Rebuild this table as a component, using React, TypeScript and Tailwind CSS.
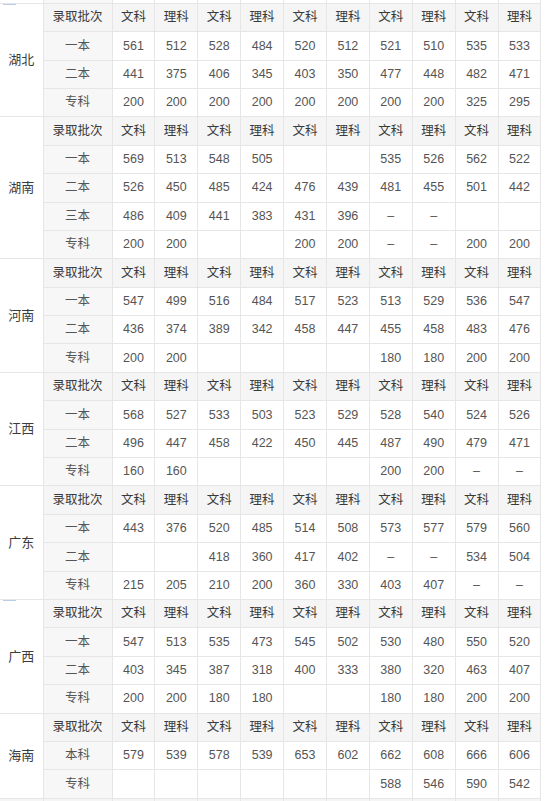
import React from "react";

type Block = {
  province: string;
  mark?: boolean;
  rows: { label: string; values: string[] }[];
};

const E = "";
const D = "–";

const BLOCKS: Block[] = [
  {
    province: "湖北",
    mark: true,
    rows: [
      { label: "一本", values: ["561", "512", "528", "484", "520", "512", "521", "510", "535", "533"] },
      { label: "二本", values: ["441", "375", "406", "345", "403", "350", "477", "448", "482", "471"] },
      { label: "专科", values: ["200", "200", "200", "200", "200", "200", "200", "200", "325", "295"] },
    ],
  },
  {
    province: "湖南",
    rows: [
      { label: "一本", values: ["569", "513", "548", "505", E, E, "535", "526", "562", "522"] },
      { label: "二本", values: ["526", "450", "485", "424", "476", "439", "481", "455", "501", "442"] },
      { label: "三本", values: ["486", "409", "441", "383", "431", "396", D, D, E, E] },
      { label: "专科", values: ["200", "200", E, E, "200", "200", D, D, "200", "200"] },
    ],
  },
  {
    province: "河南",
    rows: [
      { label: "一本", values: ["547", "499", "516", "484", "517", "523", "513", "529", "536", "547"] },
      { label: "二本", values: ["436", "374", "389", "342", "458", "447", "455", "458", "483", "476"] },
      { label: "专科", values: ["200", "200", E, E, E, E, "180", "180", "200", "200"] },
    ],
  },
  {
    province: "江西",
    rows: [
      { label: "一本", values: ["568", "527", "533", "503", "523", "529", "528", "540", "524", "526"] },
      { label: "二本", values: ["496", "447", "458", "422", "450", "445", "487", "490", "479", "471"] },
      { label: "专科", values: ["160", "160", E, E, E, E, "200", "200", D, D] },
    ],
  },
  {
    province: "广东",
    rows: [
      { label: "一本", values: ["443", "376", "520", "485", "514", "508", "573", "577", "579", "560"] },
      { label: "二本", values: [E, E, "418", "360", "417", "402", D, D, "534", "504"] },
      { label: "专科", values: ["215", "205", "210", "200", "360", "330", "403", "407", D, D] },
    ],
  },
  {
    province: "广西",
    mark: true,
    rows: [
      { label: "一本", values: ["547", "513", "535", "473", "545", "502", "530", "480", "550", "520"] },
      { label: "二本", values: ["403", "345", "387", "318", "400", "333", "380", "320", "463", "407"] },
      { label: "专科", values: ["200", "200", "180", "180", E, E, "180", "180", "200", "200"] },
    ],
  },
  {
    province: "海南",
    rows: [
      { label: "本科", values: ["579", "539", "578", "539", "653", "602", "662", "608", "666", "606"] },
      { label: "专科", values: [E, E, E, E, E, E, "588", "546", "590", "542"] },
    ],
  },
];

const HEAD = ["文科", "理科", "文科", "理科", "文科", "理科", "文科", "理科", "文科", "理科"];

const cell = "border border-[#e6e6e6] text-center align-middle p-0";

function HeaderRow({ block }: { block?: Block }) {
  return (
    <tr className="h-[28.4px]">
      {block && (
        <td
          rowSpan={block.rows.length + 1}
          className="relative border-y border-r border-[#e6e6e6] bg-white text-center align-middle text-[13px] text-[#3c3c3c]"
        >
          {block.mark && <span className="absolute left-[3px] top-0 h-[1px] w-[13px] bg-[#b9cde6]" />}
          {block.province}
        </td>
      )}
      <td className={`${cell} bg-[#f5f5f5] text-[#3a3a3a]`}>录取批次</td>
      {HEAD.map((h, i) => (
        <td key={i} className={`${cell} bg-[#f5f5f5] text-[#3a3a3a]`}>
          {h}
        </td>
      ))}
    </tr>
  );
}

export default function App() {
  return (
    <div
      className="h-[801px] w-[545px] overflow-hidden bg-white"
      style={{ fontFamily: '"Liberation Sans", "Noto Sans CJK SC", sans-serif' }}
    >
      <table className="-mt-[25.6px] w-[541px] table-fixed border-collapse text-[12.5px]">
        <colgroup>
          <col className="w-[43px]" />
          <col className="w-[69px]" />
          {HEAD.map((_, i) => (
            <col key={i} className="w-[42.9px]" />
          ))}
        </colgroup>
        <tbody>
          <tr className="h-[28.4px]">
            <td className="border-r border-[#e6e6e6] bg-white" />
            <td className={`${cell} bg-[#f7f7f7]`} />
            {HEAD.map((_, i) => (
              <td key={i} className={`${cell} bg-white`} />
            ))}
          </tr>
          {BLOCKS.map((b) => (
            <React.Fragment key={b.province}>
              <HeaderRow block={b} />
              {b.rows.map((r) => (
                <tr key={r.label} className="h-[28.4px]">
                  <td className={`${cell} bg-[#f7f7f7] text-[#555]`}>{r.label}</td>
                  {r.values.map((v, i) => (
                    <td key={i} className={`${cell} bg-white text-[#555]`}>
                      {v}
                    </td>
                  ))}
                </tr>
              ))}
            </React.Fragment>
          ))}
          <tr className="h-[28.4px]">
            <td className="border-y border-r border-[#e6e6e6] bg-[#f5f5f5]" />
            <td className={`${cell} bg-[#f5f5f5]`} />
            {HEAD.map((_, i) => (
              <td key={i} className={`${cell} bg-[#f5f5f5]`} />
            ))}
          </tr>
        </tbody>
      </table>
    </div>
  );
}
